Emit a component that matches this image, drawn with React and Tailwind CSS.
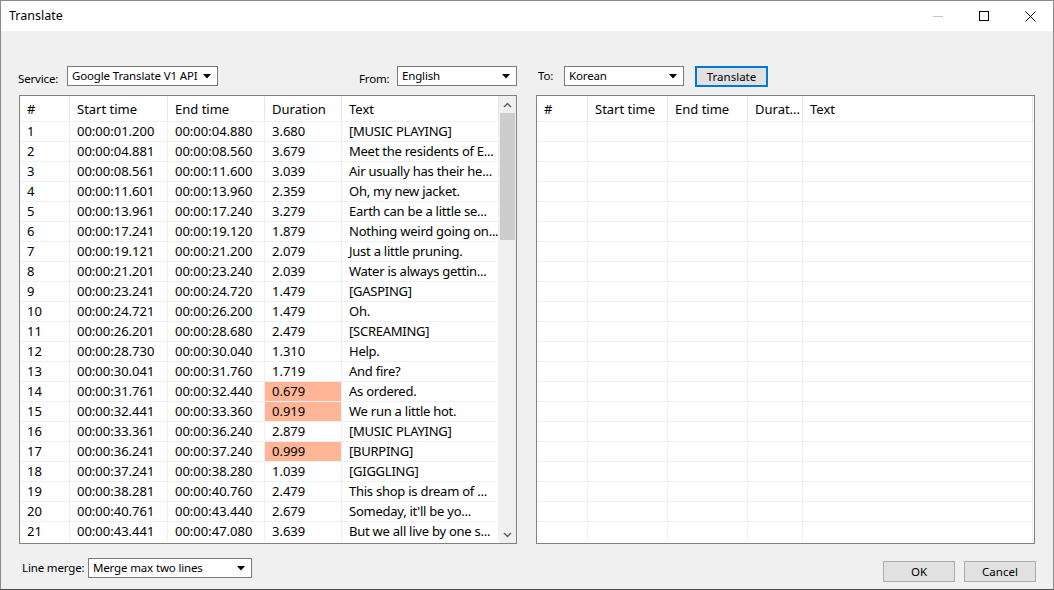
import React from "react";

const rows = [
  ["1", "00:00:01.200", "00:00:04.880", "3.680", "[MUSIC PLAYING]"],
  ["2", "00:00:04.881", "00:00:08.560", "3.679", "Meet the residents of E..."],
  ["3", "00:00:08.561", "00:00:11.600", "3.039", "Air usually has their he..."],
  ["4", "00:00:11.601", "00:00:13.960", "2.359", "Oh, my new jacket."],
  ["5", "00:00:13.961", "00:00:17.240", "3.279", "Earth can be a little se..."],
  ["6", "00:00:17.241", "00:00:19.120", "1.879", "Nothing weird going on..."],
  ["7", "00:00:19.121", "00:00:21.200", "2.079", "Just a little pruning."],
  ["8", "00:00:21.201", "00:00:23.240", "2.039", "Water is always gettin..."],
  ["9", "00:00:23.241", "00:00:24.720", "1.479", "[GASPING]"],
  ["10", "00:00:24.721", "00:00:26.200", "1.479", "Oh."],
  ["11", "00:00:26.201", "00:00:28.680", "2.479", "[SCREAMING]"],
  ["12", "00:00:28.730", "00:00:30.040", "1.310", "Help."],
  ["13", "00:00:30.041", "00:00:31.760", "1.719", "And fire?"],
  ["14", "00:00:31.761", "00:00:32.440", "0.679", "As ordered.", true],
  ["15", "00:00:32.441", "00:00:33.360", "0.919", "We run a little hot.", true],
  ["16", "00:00:33.361", "00:00:36.240", "2.879", "[MUSIC PLAYING]"],
  ["17", "00:00:36.241", "00:00:37.240", "0.999", "[BURPING]", true],
  ["18", "00:00:37.241", "00:00:38.280", "1.039", "[GIGGLING]"],
  ["19", "00:00:38.281", "00:00:40.760", "2.479", "This shop is dream of ..."],
  ["20", "00:00:40.761", "00:00:43.440", "2.679", "Someday, it'll be yo..."],
  ["21", "00:00:43.441", "00:00:47.080", "3.639", "But we all live by one s..."],
];

function Arrow() {
  return (
    <svg width="8" height="5" viewBox="0 0 8 5" className="shrink-0">
      <path d="M0 0H8L4 4.5Z" fill="#000" />
    </svg>
  );
}

function Select({ value, w }) {
  return (
    <div
      className={`${w} shrink-0 h-[20px] bg-white border border-[#7a7a7a] flex items-center pl-[4px] pr-[6px] justify-between`}
    >
      <span className="whitespace-nowrap leading-none text-[11.5px] tracking-[-0.15px]">{value}</span>
      <Arrow />
    </div>
  );
}

const leftCols = ["w-[50px]", "w-[98px]", "w-[97px]", "w-[77px]", "w-[157px]"];
const rightCols = ["w-[51px]", "w-[80px]", "w-[80px]", "w-[55px]", "w-[230px]"];

function Header({ cols, labels }) {
  return (
    <div className="flex h-[25px] shrink-0">
      {labels.map((l, i) => (
        <div
          key={i}
          className={`${cols[i]} shrink-0 h-full flex items-center pl-[7px] pt-[2px] border-r border-[#e5e5e5] whitespace-nowrap overflow-hidden`}
        >
          {l}
        </div>
      ))}
    </div>
  );
}

function UpChevron() {
  return (
    <svg width="9" height="6" viewBox="0 0 9 6">
      <path d="M1 5L4.5 1.5L8 5" stroke="#606060" strokeWidth="1.4" fill="none" />
    </svg>
  );
}
function DownChevron() {
  return (
    <svg width="9" height="6" viewBox="0 0 9 6">
      <path d="M1 1L4.5 4.5L8 1" stroke="#606060" strokeWidth="1.4" fill="none" />
    </svg>
  );
}

const label = "text-[11.5px] tracking-[-0.15px] leading-none whitespace-nowrap shrink-0";

export default function App() {
  return (
    <div
      className="w-[1054px] h-[590px] box-border border border-[#8a8a8a] border-b-[#4a4a4a] bg-[#f0f0f0] flex flex-col text-[13px] text-black overflow-hidden"
      style={{ fontFamily: '"Noto Sans", "Liberation Sans", sans-serif' }}
    >
      {/* Title bar */}
      <div className="h-[30px] bg-white flex items-center shrink-0">
        <div className="pl-[8px] flex-1 text-[12.5px]">Translate</div>
        <div className="flex h-full">
          <div className="w-[46px] h-full flex items-center justify-center">
            <svg width="10" height="10" viewBox="0 0 10 10">
              <path d="M0 5.5H10" stroke="#c6c6c6" strokeWidth="1" />
            </svg>
          </div>
          <div className="w-[46px] h-full flex items-center justify-center">
            <svg width="10" height="10" viewBox="0 0 10 10">
              <rect x="0.5" y="0.5" width="9" height="9" stroke="#000" strokeWidth="1" fill="none" />
            </svg>
          </div>
          <div className="w-[46px] h-full flex items-center justify-center">
            <svg width="11" height="11" viewBox="0 0 11 11">
              <path d="M0.5 0.5L10.5 10.5M10.5 0.5L0.5 10.5" stroke="#000" strokeWidth="1" />
            </svg>
          </div>
        </div>
      </div>

      {/* Body */}
      <div className="flex-1 flex flex-col pl-[18px] pr-[17px] pt-[35px]">
        {/* Top row */}
        <div className="flex gap-[19px] h-[20px] items-center">
          <div className="w-[498px] shrink-0 flex items-center">
            <div className={`w-[49px] -ml-[1px] pt-[6px] ${label}`}>Service:</div>
            <Select value="Google Translate V1 API" w="w-[151px]" />
            <div className="flex-1" />
            <div className={`w-[38px] pt-[6px] ${label}`}>From:</div>
            <Select value="English" w="w-[120px]" />
          </div>
          <div className="flex items-center">
            <div className={`w-[28px] pl-[2px] ${label}`}>To:</div>
            <Select value="Korean" w="w-[120px]" />
            <div className="ml-[11px] shrink-0 w-[73px] h-[21px] mt-[1px] bg-[#e1e1e1] border-2 border-[#0078d7] flex items-center justify-center text-[11.5px] leading-none">
              Translate
            </div>
          </div>
        </div>

        {/* Grids */}
        <div className="flex gap-[19px] mt-[9px] h-[449px] shrink-0">
          {/* Left grid */}
          <div className="w-[498px] shrink-0 h-full bg-white border border-[#828282] flex overflow-hidden">
            <div className="w-[479px] shrink-0 flex flex-col">
              <Header cols={leftCols} labels={["#", "Start time", "End time", "Duration", "Text"]} />
              {rows.map((r) => (
                <div key={r[0]} className="flex h-[20px] shrink-0 border-t border-[#f0f0f0]">
                  {r.slice(0, 5).map((c, i) => (
                    <div
                      key={i}
                      className={`${leftCols[i]} shrink-0 h-full flex items-center pl-[7px] border-r border-[#f0f0f0] whitespace-nowrap overflow-hidden ${
                        i === 3 && r[5] ? "bg-[#ffb596]" : ""
                      } ${i === 4 ? "pl-[6px] tracking-[-0.25px]" : ""}`}
                    >
                      {c}
                    </div>
                  ))}
                </div>
              ))}
            </div>
            {/* Scrollbar */}
            <div className="w-[17px] shrink-0 h-full bg-[#f0f0f0] flex flex-col items-center">
              <div className="h-[17px] w-full flex items-center justify-center">
                <UpChevron />
              </div>
              <div className="w-[15px] h-[127px] bg-[#cdcdcd]" />
              <div className="flex-1" />
              <div className="h-[17px] w-full flex items-center justify-center">
                <DownChevron />
              </div>
            </div>
          </div>

          {/* Right grid */}
          <div className="w-[499px] shrink-0 h-full bg-white border border-[#828282] flex flex-col overflow-hidden">
            <Header cols={rightCols} labels={["#", "Start time", "End time", "Durat...", "Text"]} />
            {rows.map((r) => (
              <div key={r[0]} className="flex h-[20px] shrink-0 border-t border-[#f0f0f0]">
                {rightCols.map((c, i) => (
                  <div key={i} className={`${c} shrink-0 h-full border-r border-[#f0f0f0]`} />
                ))}
              </div>
            ))}
          </div>
        </div>

        {/* Bottom row */}
        <div className="flex items-start justify-between mt-[14px]">
          <div className="flex items-center">
            <div className={`w-[69px] pl-[3px] ${label}`}>Line merge:</div>
            <Select value="Merge max two lines" w="w-[164px]" />
          </div>
          <div className="flex gap-[9px] mt-[3px]">
            <div className="w-[72px] h-[21px] bg-[#e1e1e1] border border-[#adadad] flex items-center justify-center text-[11.5px] leading-none">
              OK
            </div>
            <div className="w-[72px] h-[21px] bg-[#e1e1e1] border border-[#adadad] flex items-center justify-center text-[11.5px] leading-none">
              Cancel
            </div>
          </div>
        </div>
      </div>
    </div>
  );
}
